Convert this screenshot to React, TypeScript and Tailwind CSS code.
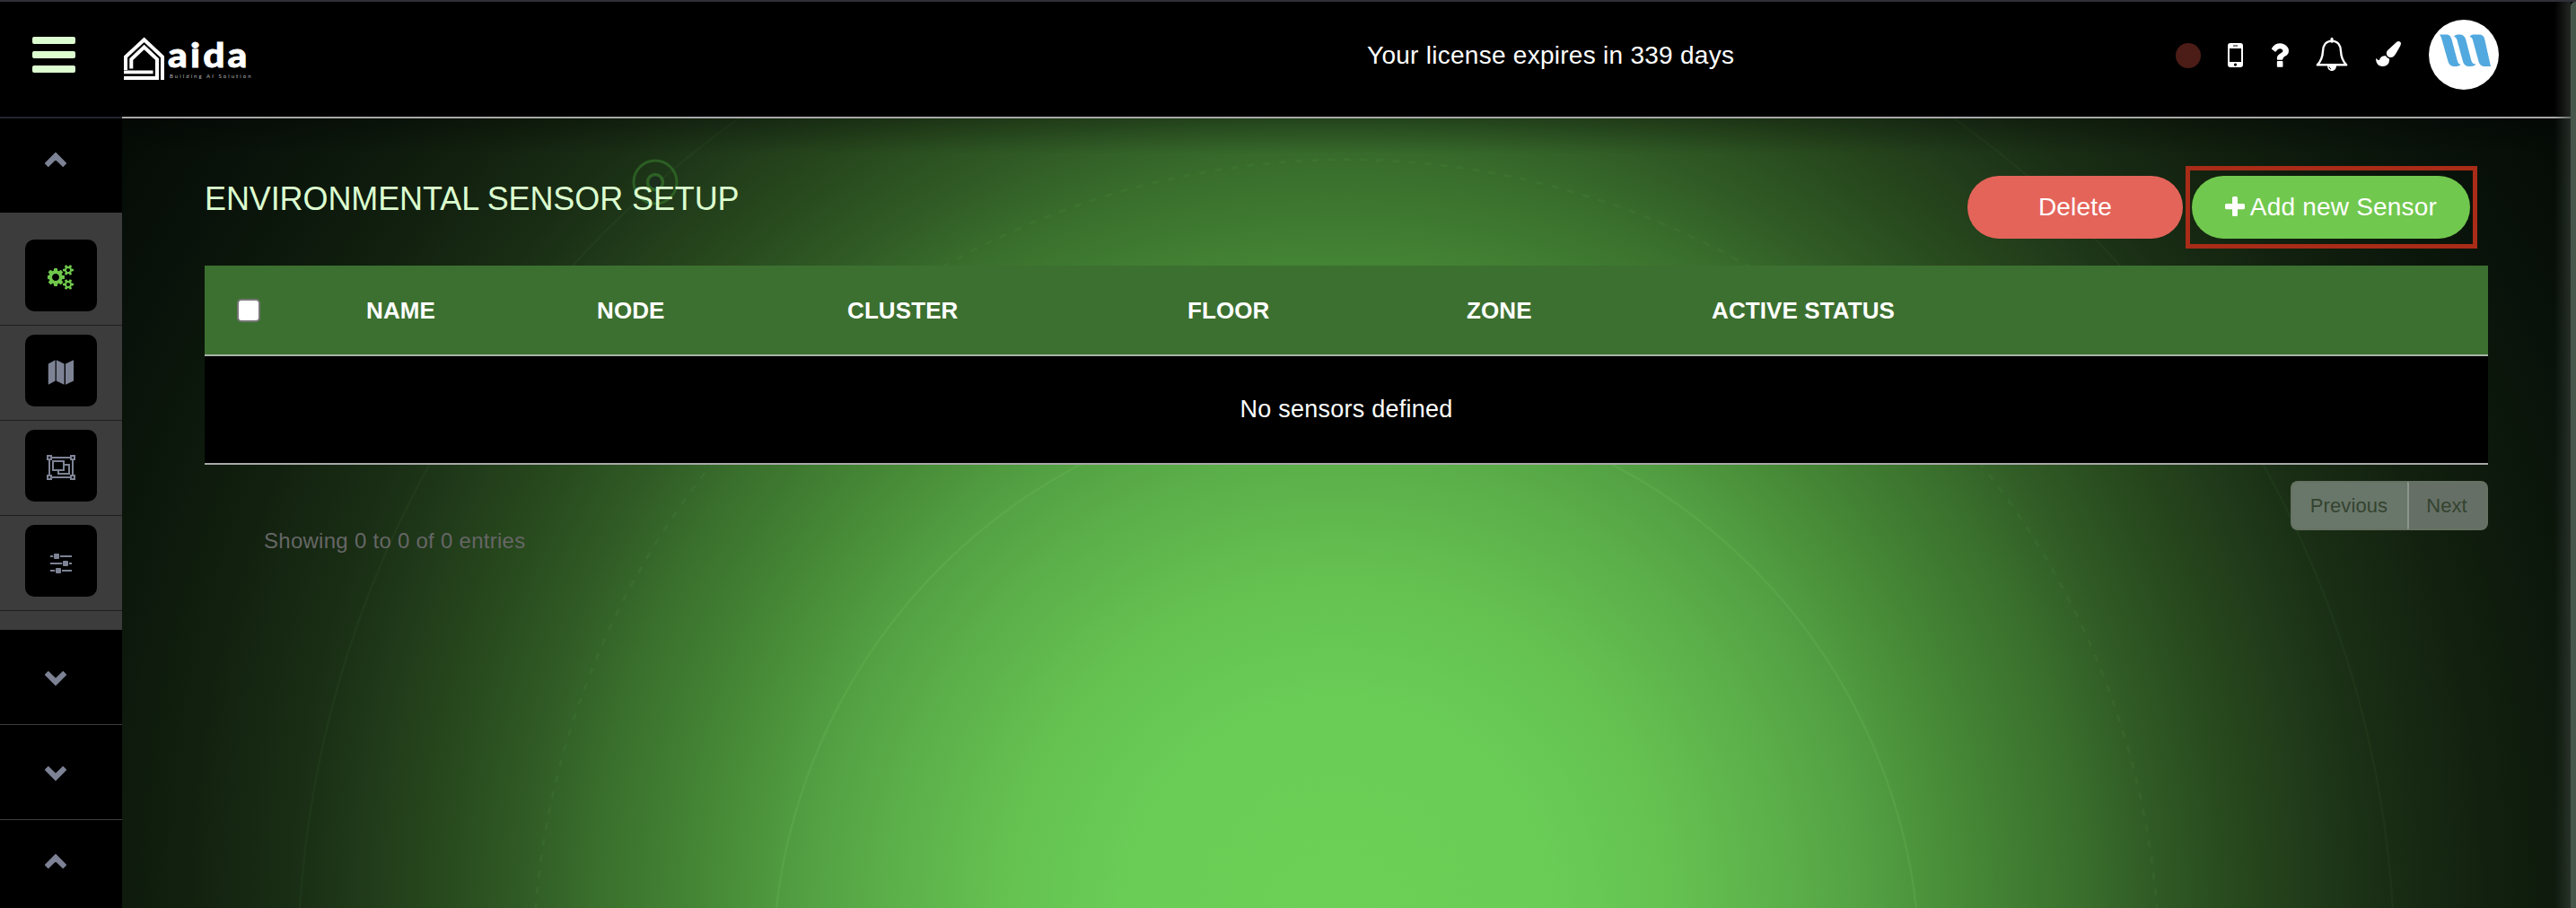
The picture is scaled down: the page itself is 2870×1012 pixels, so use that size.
import React from 'react';

const gearsPath =
  'M832 896q0-106-75-181t-181-75-181 75-75 181 75 181 181 75 181-75 75-181zm768 512q0-52-38-90t-90-38-90 38-38 90q0 53 37.5 90.5t90.5 37.5 90.5-37.5 37.5-90.5zm0-1024q0-52-38-90t-90-38-90 38-38 90q0 53 37.5 90.5t90.5 37.5 90.5-37.5 37.5-90.5zm-384 421v185q0 10-7 19.5t-16 10.5l-155 24q-11 35-32 76 34 48 90 115 7 11 7 20 0 12-7 19-23 30-82.5 89.5t-78.5 59.5q-11 0-21-7l-115-90q-37 19-77 31-11 108-23 155-7 24-30 24h-186q-11 0-20-7.5t-10-17.5l-23-153q-34-10-75-31l-118 89q-7 7-20 7-11 0-21-8-144-133-144-160 0-9 7-19 10-14 41-53t47-61q-23-44-35-82l-152-24q-10-1-17-9.5t-7-19.5v-185q0-10 7-19.5t16-10.5l155-24q11-35 32-76-34-48-90-115-7-11-7-20 0-12 7-20 22-30 82-89t79-59q11 0 21 7l115 90q34-18 77-32 11-108 23-154 7-24 30-24h186q11 0 20 7.5t10 17.5l23 153q34 10 75 31l118-89q8-7 20-7 11 0 21 8 144 133 144 160 0 8-7 19-12 16-42 54t-45 60q23 48 34 82l152 23q10 2 17 10.5t7 19.5zm640 533v140q0 16-149 31-12 27-30 52 51 113 51 138 0 4-4 7-122 71-124 71-8 0-46-47t-52-68q-20 2-30 2t-30-2q-14 21-52 68t-46 47q-2 0-124-71-4-3-4-7 0-25 51-138-18-25-30-52-149-15-149-31v-140q0-16 149-31 13-29 30-52-51-113-51-138 0-4 4-7 4-2 35-20t59-34 30-16q8 0 46 46.5t52 67.5q20-2 30-2t30 2q51-71 92-112l6-2q4 0 124 70 4 3 4 7 0 25-51 138 17 23 30 52 149 15 149 31zm0-1024v140q0 16-149 31-12 27-30 52 51 113 51 138 0 4-4 7-122 71-124 71-8 0-46-47t-52-68q-20 2-30 2t-30-2q-14 21-52 68t-46 47q-2 0-124-71-4-3-4-7 0-25 51-138-18-25-30-52-149-15-149-31v-140q0-16 149-31 13-29 30-52-51-113-51-138 0-4 4-7 4-2 35-20t59-34 30-16q8 0 46 46.5t52 67.5q20-2 30-2t30 2q51-71 92-112l6-2q4 0 124 70 4 3 4 7 0 25-51 138 17 23 30 52 149 15 149 31z';

const questionPath =
  'M1088 1256v240q0 16-12 28t-28 12h-240q-16 0-28-12t-12-28v-240q0-16 12-28t28-12h240q16 0 28 12t12 28zm316-600q0 54-15.5 101t-35 76.5-55 59.5-57.5 43.5-61 35.5q-41 23-68.5 65t-27.5 67q0 17-12 32.5t-28 15.5h-240q-15 0-25.5-18.5t-10.5-37.5v-45q0-83 65-156.5t143-108.5q59-27 84-56t25-76q0-42-46.5-74t-107.5-32q-65 0-108 29-35 25-107 115-13 16-31 16-12 0-25-8l-164-125q-13-10-15.5-25t5.5-28q160-266 464-266 80 0 161 31t146 83 106 127.5 41 158.5z';

const brushPath =
  'M1615 0q70 0 122.5 46.5t52.5 116.5q0 63-45 151-332 629-465 752-97 91-218 91-126 0-216.5-92.5t-90.5-219.5q0-128 92-212l638-579q59-54 130-54zm-909 1034q39 76 106.5 130t150.5 76l1 71q4 213-129.5 347t-348.5 134q-123 0-218-46.5t-152.5-127.5-86.5-183-29-220q7 5 41 30t62 44.5 59 36.5 46 17q41 0 55-37 25-66 57.5-112.5t69.5-76 88-47.5 103-25.5 125-10.5z';

function Chevron({ down = false }: { down?: boolean }) {
  return (
    <svg
      viewBox="0 0 26 18"
      className={down ? 'h-[18px] w-[26px] rotate-180' : 'h-[18px] w-[26px]'}
    >
      <path
        d="M13 1.6 24.4 13.1 21.2 16.3 13 8.2 4.8 16.3 1.6 13.1z"
        fill="#7d8395"
        stroke="#7d8395"
        strokeWidth="1.4"
        strokeLinejoin="round"
      />
    </svg>
  );
}

function Gears() {
  return (
    <svg viewBox="0 0 1920 1792" className="h-7 w-[30px]" fill="#6fc84c">
      <path d={gearsPath} />
    </svg>
  );
}

function MapIcon() {
  return (
    <svg viewBox="0 0 30 28" className="h-7 w-[30px]" fill="#7d8395">
      <path d="M.8 4.6 8.6.3v23.2L.8 27.8zM9.8.3l8.8 4.3v23.2L9.8 23.5zM20 4.6 29 .3v23.2l-9 4.3z" />
    </svg>
  );
}

function GroupIcon() {
  return (
    <svg viewBox="0 0 32 28" className="h-7 w-8" fill="none" stroke="#7d8395" strokeWidth="2">
      <path d="M6 3h20M6 25h20M3 6v16M29 6v16" />
      <path d="M1 1h4v4H1zM27 1h4v4h-4zM1 23h4v4H1zM27 23h4v4h-4z" />
      <path d="M7 7h12v10H7zM19 11h6v10H13v-4" />
    </svg>
  );
}

function SlidersIcon() {
  return (
    <svg viewBox="0 0 24 22" className="mt-[2px] h-[22px] w-6" fill="#7d8395">
      <path d="M0 2h3.2v2H0zM11 2h13v2H11zM0 10h13.2v2H0zM21 10h3v2h-3zM0 18h5.2v2H0zM13 18h11v2H13z" />
      <rect x="4" y="0" width="6" height="6" rx="1" />
      <rect x="14" y="8" width="6" height="6" rx="1" />
      <rect x="6" y="16" width="6" height="6" rx="1" />
    </svg>
  );
}

function SidebarTile({ children }: { children: React.ReactNode }) {
  return (
    <div className="h-[106px] border-b border-[#1e1e1e] pt-[10px] pl-7">
      <div className="flex h-20 w-20 items-center justify-center rounded-[10px] bg-black pt-1">
        {children}
      </div>
    </div>
  );
}

function Sidebar() {
  return (
    <aside className="w-[136px] shrink-0 overflow-hidden bg-black">
      <div className="h-[105px] pt-[37px] pl-[49px]">
        <Chevron />
      </div>
      <div className="h-[465px] bg-[#3c3c3c] pt-5">
        <SidebarTile>
          <Gears />
        </SidebarTile>
        <SidebarTile>
          <MapIcon />
        </SidebarTile>
        <SidebarTile>
          <GroupIcon />
        </SidebarTile>
        <SidebarTile>
          <SlidersIcon />
        </SidebarTile>
      </div>
      <div className="h-[106px] border-b border-[#3c3c3c] pt-[45px] pl-[49px]">
        <Chevron down />
      </div>
      <div className="h-[106px] border-b border-[#3c3c3c] pt-[45px] pl-[49px]">
        <Chevron down />
      </div>
      <div className="pt-[37px] pl-[49px]">
        <Chevron />
      </div>
    </aside>
  );
}

function Logo() {
  return (
    <div className="flex">
      <svg viewBox="0 0 46 48" className="h-12 w-[46px]" fill="none" stroke="#fff" strokeWidth="4">
        <path d="M2 37V22.3L22.6 3.3 43 22.3V48" />
        <path d="M8.3 35.5V25L22.6 11.6 37 25V46H0" />
        <path d="M0 39.4h32.5" strokeWidth="3.8" />
      </svg>
      <div className="flex w-[100px] flex-col pl-[3px]">
        <span className="h-[40px] origin-left scale-x-[1.12] font-['Lato'] text-[38px] leading-[38px] font-black tracking-[2.8px] whitespace-nowrap text-white [-webkit-text-stroke:0.8px_#fff]">
          aida
        </span>
        <span className="pl-[2px] font-['Lato'] text-[6px] leading-[8px] tracking-[2.05px] whitespace-nowrap text-[#b5b5b5]">
          Building AI Solution
        </span>
      </div>
    </div>
  );
}

function Bell() {
  return (
    <svg viewBox="0 0 36 40" className="h-10 w-9" fill="none" stroke="#fff" strokeWidth="2.4">
      <path
        d="M18 4.6C11.5 4.6 8.3 9.5 8 16C7.7 23 6 27 1.8 31.3H34.2C30 27 28.3 23 28 16C27.7 9.5 24.5 4.6 18 4.6z"
        strokeLinejoin="round"
      />
      <path d="M18 2.2v3" strokeWidth="3" strokeLinecap="round" />
      <path d="M13 32c0 3.8 2.2 6 5 6s5-2.2 5-6z" fill="#fff" stroke="none" />
      <path d="M15 33.5c.3 1.3 1 2.1 2.1 2.5" stroke="#000" strokeWidth="1" />
    </svg>
  );
}

function Avatar() {
  return (
    <div className="h-[78px] w-[78px] rounded-full bg-white">
      <svg viewBox="0 0 78 78" className="h-[78px] w-[78px]" fill="#52a9df">
        <path d="M12 16.5h7c4 0 5.5 2 6.5 5.500l6 22.500c.8 3 1.500 5 4 5.500-1.500 1.500-3.500 2-6 2-5 0-7-2-8-5.500L14.500 22c-.6-2.500-1.300-4-2.500-5.500z" />
        <path d="M28 19c1-2 3-2.500 6-2.500 4 0 6.200 2 7.200 5.500l6 23c.8 3 2.300 4.500 5.300 4.500-1.500 1.800-3.500 2.500-6.500 2.500-5 0-7-2-8-5.500l-6-22C31.300 21 30.500 19.500 28 19z" />
        <path d="M45.500 19c1-2 3-2.500 6-2.500h4.500c3.500 0 5.300 1.500 6.200 5L69 52h-6c-4.500 0-6.500-2-7.500-5.500l-6-22C48.800 21 48 19.500 45.500 19z" />
      </svg>
    </div>
  );
}

function Header() {
  return (
    <header className="flex h-[130px] shrink-0 bg-black">
      <div className="w-[136px] border-b-2 border-[#20252d] pt-[39px] pl-9">
        <div className="flex w-12 flex-col gap-2">
          <div className="h-2 rounded-[2px] bg-[#dcfdd0]" />
          <div className="h-2 rounded-[2px] bg-[#dcfdd0]" />
          <div className="h-2 rounded-[2px] bg-[#dcfdd0]" />
        </div>
      </div>
      <div className="flex grow border-b-2 border-[#a8a8a8]">
        <div className="w-[1387px] pt-[39px] pl-[2px]">
          <Logo />
        </div>
        <div className="w-[901px] pt-[42px] text-[28px] leading-9 tracking-[0.27px] text-white">
          Your license expires in 339 days
        </div>
        <div className="mt-[20px] flex h-[78px] items-center">
          <div className="mt-[2px] h-7 w-7 rounded-full bg-[#4c1c17]" />
          <svg viewBox="0 0 17 27" className="ml-[30px] h-[27px] w-[17px]" fill="#fff">
            <path
              fillRule="evenodd"
              d="M3 0h11a3 3 0 0 1 3 3v21a3 3 0 0 1-3 3H3a3 3 0 0 1-3-3V3a3 3 0 0 1 3-3zM2 6v15h13V6zM6 2.500v1h5v-1zM8.500 22.500a1.600 1.600 0 1 0 .01 0z"
            />
          </svg>
          <svg viewBox="386 256 1020 1280" className="ml-[30px] h-[27px] w-[21px]" fill="#fff">
            <path d={questionPath} />
          </svg>
          <div className="ml-[30px]">
            <Bell />
          </div>
          <svg viewBox="0 0 1792 1792" className="-mt-[2px] ml-[31px] h-7 w-7" fill="#fff">
            <path d={brushPath} />
          </svg>
          <div className="ml-[31px]">
            <Avatar />
          </div>
        </div>
      </div>
    </header>
  );
}

function Rings() {
  return (
    <svg
      viewBox="136 132 2734 880"
      className="absolute inset-0 h-full w-full"
      fill="none"
      stroke="#8fe07a"
    >
      <circle cx="1500" cy="1084" r="639" strokeWidth="2.5" opacity="0.11" />
      <circle cx="1500" cy="1084" r="906" strokeWidth="3" strokeDasharray="8 10" opacity="0.06" />
      <circle cx="1500" cy="1084" r="1168" strokeWidth="2.5" opacity="0.04" />
      <g stroke="#34752a">
        <circle cx="730" cy="203" r="24" strokeWidth="3" opacity="0.65" />
        <circle cx="730" cy="203" r="8.5" strokeWidth="3.5" fill="#1b2a20" opacity="0.7" />
      </g>
    </svg>
  );
}

const columns = ['NAME', 'NODE', 'CLUSTER', 'FLOOR', 'ZONE', 'ACTIVE STATUS'];

function Table() {
  return (
    <div className="mt-[19px] w-[2544px]">
      <div className="grid h-[101px] grid-cols-[180px_257px_279px_379px_311px_273px_1fr] items-center border-b-2 border-[#a9b5a6] bg-[#3c7030] text-[26px] font-bold tracking-[0.1px] text-white">
        <div className="pl-9">
          <div className="h-[26px] w-[26px] rounded-[5px] border-2 border-[#767676] bg-white" />
        </div>
        {columns.map((name) => (
          <div key={name} className="pt-[2px]">
            {name}
          </div>
        ))}
      </div>
      <div className="flex h-[121px] items-center justify-center border-b-2 border-[#a8a8a8] bg-black text-[27px] tracking-[0.24px] text-white">
        No sensors defined
      </div>
    </div>
  );
}

function Content() {
  return (
    <main className="relative grow overflow-hidden bg-[radial-gradient(circle_1600px_at_1354px_885px,#6cd057_0%,#6ace56_14%,#65c251_23%,#5cb04a_31%,#53a043_37%,#468836_44%,#3a702d_51.5%,#305a25_57%,#26461c_63.5%,#203a1a_68%,#192d14_73%,#12210f_80%,#0d190c_86%,#09120a_93%,#050c06_100%)]">
      <Rings />
      <div className="absolute inset-x-0 top-0 h-10 bg-linear-to-b from-black/30 to-transparent" />
      <div className="relative pl-[92px]">
        <div className="flex h-[145px] justify-between pt-[53px]">
          <h1 className="pt-[16px] text-[36px] leading-[42px] tracking-[-0.1px] text-[#dcfdd0]">
            ENVIRONMENTAL SENSOR SETUP
          </h1>
          <div className="flex gap-[3px] pr-[110px]">
            <button className="mt-[11px] h-[70px] w-[240px] rounded-full bg-[#e4645a] text-[28px] tracking-[0.2px] text-white">
              Delete
            </button>
            <div className="h-[92px] w-[325px] border-[5px] border-[#a82c17] pt-[6px] pl-[2px]">
              <button className="flex h-[70px] w-[310px] items-center justify-center rounded-full bg-[#71c84e] text-[28px] tracking-[0.2px] text-white">
                <svg viewBox="0 0 22 22" className="-mt-[2px] mr-[6px] h-[22px] w-[22px]" fill="#fff">
                  <rect x="0" y="8" width="22" height="6.2" rx="1.5" />
                  <rect x="8" y="0" width="6" height="22" rx="1.5" />
                </svg>
                Add new Sensor
              </button>
            </div>
          </div>
        </div>
        <Table />
        <div className="flex w-[2544px] justify-between pt-[18px]">
          <div className="pt-[51px] pl-[66px] text-[24px] leading-8 tracking-[0.27px] text-[#666]">
            Showing 0 to 0 of 0 entries
          </div>
          <div className="flex h-[55px] text-[22px] text-[#34432f]">
            <div className="flex w-[130px] items-center justify-center rounded-l-lg border-2 border-r-0 border-[#667263] bg-[#69776a] pr-[2px] tracking-[0.1px]">
              Previous
            </div>
            <div className="flex w-[90px] items-center justify-center rounded-r-lg border-2 border-l-2 border-[#667263] border-l-[#8b968a] bg-[#656f65] pr-[2px] tracking-[0.1px]">
              Next
            </div>
          </div>
        </div>
      </div>
    </main>
  );
}

export default function App() {
  return (
    <div className="relative flex h-[1012px] w-[2870px] flex-col overflow-hidden border-t-2 border-[#2f2f37] bg-black font-['Liberation_Sans',Arial,sans-serif]">
      <Header />
      <div className="flex min-h-0 grow">
        <Sidebar />
        <Content />
      </div>
      <div className="absolute top-0 right-0 h-[1010px] w-[6px] rounded-tl-[5px] bg-[#46564a]" />
      <div className="absolute top-0 right-[6px] h-[1010px] w-[18px] bg-linear-to-r from-transparent to-[#3a423c]/60" />
    </div>
  );
}
